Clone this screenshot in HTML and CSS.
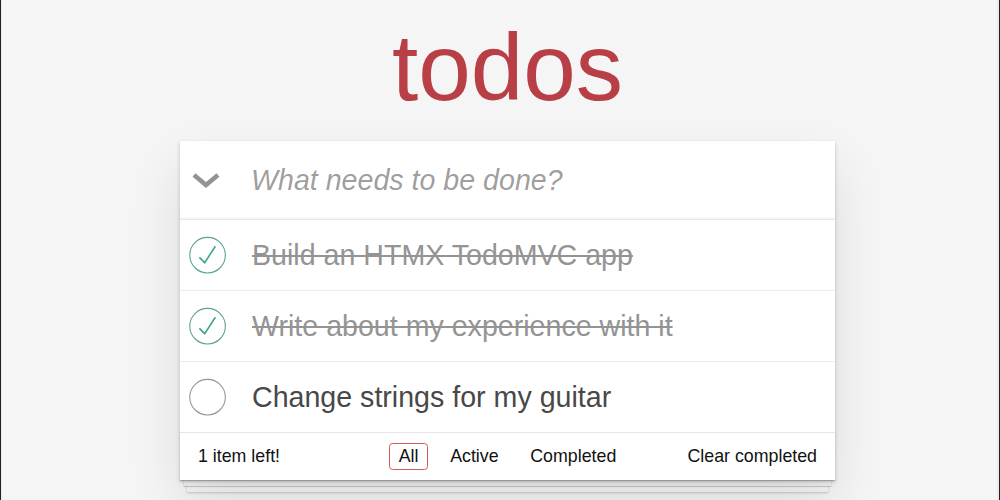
FILE: index.html
```html
<!DOCTYPE html>
<html lang="en">
<head>
<meta charset="utf-8">
<title>HTMX • TodoMVC</title>
<link rel="stylesheet" href="styles.css">
</head>
<body>
<div class="page">
  <h1 class="title">todos</h1>
  <section class="todoapp">
    <header class="new-row">
      <label class="toggle-all" aria-label="Mark all as complete">
        <svg width="28" height="16" viewBox="0 0 28 16"><polyline points="2,2 14,12 26,2" fill="none" stroke="#949494" stroke-width="4.6" stroke-linejoin="miter"/></svg>
      </label>
      <input class="new-todo" placeholder="What needs to be done?">
    </header>
    <ul class="todo-list">
      <li class="todo completed">
        <span class="toggle"><svg width="48" height="48" viewBox="-10 -18 100 135"><circle cx="50" cy="50" r="50" fill="none" stroke="#59A193" stroke-width="3"/><path fill="none" stroke="#3EA390" stroke-width="4.5" d="M72 25L42 71 27 56"/></svg></span>
        <span class="label">Build an HTMX TodoMVC app</span>
      </li>
      <li class="todo completed">
        <span class="toggle"><svg width="48" height="48" viewBox="-10 -18 100 135"><circle cx="50" cy="50" r="50" fill="none" stroke="#59A193" stroke-width="3"/><path fill="none" stroke="#3EA390" stroke-width="4.5" d="M72 25L42 71 27 56"/></svg></span>
        <span class="label">Write about my experience with it</span>
      </li>
      <li class="todo">
        <span class="toggle"><svg width="48" height="48" viewBox="-10 -18 100 135"><circle cx="50" cy="50" r="50" fill="none" stroke="#949494" stroke-width="3"/></svg></span>
        <span class="label">Change strings for my guitar</span>
      </li>
    </ul>
    <footer class="footer">
      <span class="todo-count">1 item left!</span>
      <ul class="filters">
        <li><a class="selected">All</a></li>
        <li><a>Active</a></li>
        <li><a>Completed</a></li>
      </ul>
      <button class="clear-completed">Clear completed</button>
    </footer>
  </section>
</div>
</body>
</html>
```
FILE: styles.css
```css
* { box-sizing: border-box; }
html, body { margin: 0; padding: 0; }
body {
  background: #f5f5f5;
  font-family: "Liberation Sans", Arial, sans-serif;
  color: #111;
}
.page {
  min-height: 500px;
  border-left: 1px solid #222;
  border-right: 1px solid #222;
  padding: 19.5px 0 0 15px;
  box-shadow: inset 6px 0 0 -5px #ebebeb, inset -7px 0 0 -5px #ebebeb;
}
.title {
  margin: 0 auto 27px;
  width: 655px;
  text-align: center;
  font-size: 94.5px;
  line-height: 94.5px;
  font-weight: 400;
  color: #b83f45;
}
.todoapp {
  position: relative;
  width: 655px;
  margin: 0 auto;
  background: #fff;
  box-shadow: 0 2px 4px 0 rgba(0,0,0,0.2), 0 25px 50px 0 rgba(0,0,0,0.1);
}
.new-row {
  display: flex;
  align-items: center;
  height: 79px;
  border-bottom: 1px solid #e6e6e6;
  box-shadow: inset 0 -2px 1px rgba(0,0,0,0.03);
}
.toggle-all {
  flex: none;
  width: 51px;
  display: flex;
  justify-content: center;
  padding-left: 1px;
  padding-top: 1px;
}
.new-todo {
  flex: 1;
  min-width: 0;
  border: 0;
  outline: none;
  background: transparent;
  padding: 0 19px 0 20px;
  font-family: inherit;
  font-size: 28.6px;
  line-height: 40px;
  height: 40px;
  color: #111;
}
.new-todo::placeholder {
  font-style: italic;
  color: rgba(0,0,0,0.4);
}
.todo-list {
  list-style: none;
  margin: 0;
  padding: 0;
}
.todo {
  display: flex;
  align-items: center;
  border-bottom: 1px solid #ededed;
}
.todo:last-child { border-bottom: 0; }
.toggle {
  flex: none;
  width: 48px;
  height: 48px;
  display: block;
}
.toggle svg { display: block; }
.label {
  padding: 17.8px 18px 17.8px 24px;
  font-size: 28.6px;
  line-height: 34.3px;
  color: #484848;
}
.completed .label {
  color: #949494;
  text-decoration: line-through;
}
.footer {
  position: relative;
  display: grid;
  grid-template-columns: 1fr auto 1fr;
  align-items: center;
  padding: 10px 18px;
  height: 48px;
  border-top: 1px solid #e6e6e6;
  font-size: 17.8px;
  color: #111;
}
.footer::before {
  content: "";
  position: absolute;
  left: 0;
  right: 0;
  bottom: 0;
  height: 48px;
  overflow: hidden;
  z-index: -1;
  box-shadow: 0 1px 1px rgba(0,0,0,0.2),
    0 9.5px 0 -3.6px #f6f6f6,
    0 10.7px 1px -3.6px rgba(0,0,0,0.2),
    0 19px 0 -7px #f6f6f6,
    0 20.2px 2px -7px rgba(0,0,0,0.2);
}
.todo-count { justify-self: start; }
.filters {
  list-style: none;
  margin: 0;
  padding: 0;
  display: flex;
}
.filters a {
  display: block;
  margin: 0 3.6px;
  padding: 3.6px 8.3px;
  border: 1px solid transparent;
  border-radius: 3.6px;
  color: inherit;
  line-height: 18px;
}
.filters li + li a { margin-left: 9.5px; }
.filters a.selected { border-color: #cf5a60; }
.clear-completed {
  justify-self: end;
  border: 0;
  background: none;
  padding: 0;
  font-family: inherit;
  font-size: 17.8px;
  color: #111;
}
```
